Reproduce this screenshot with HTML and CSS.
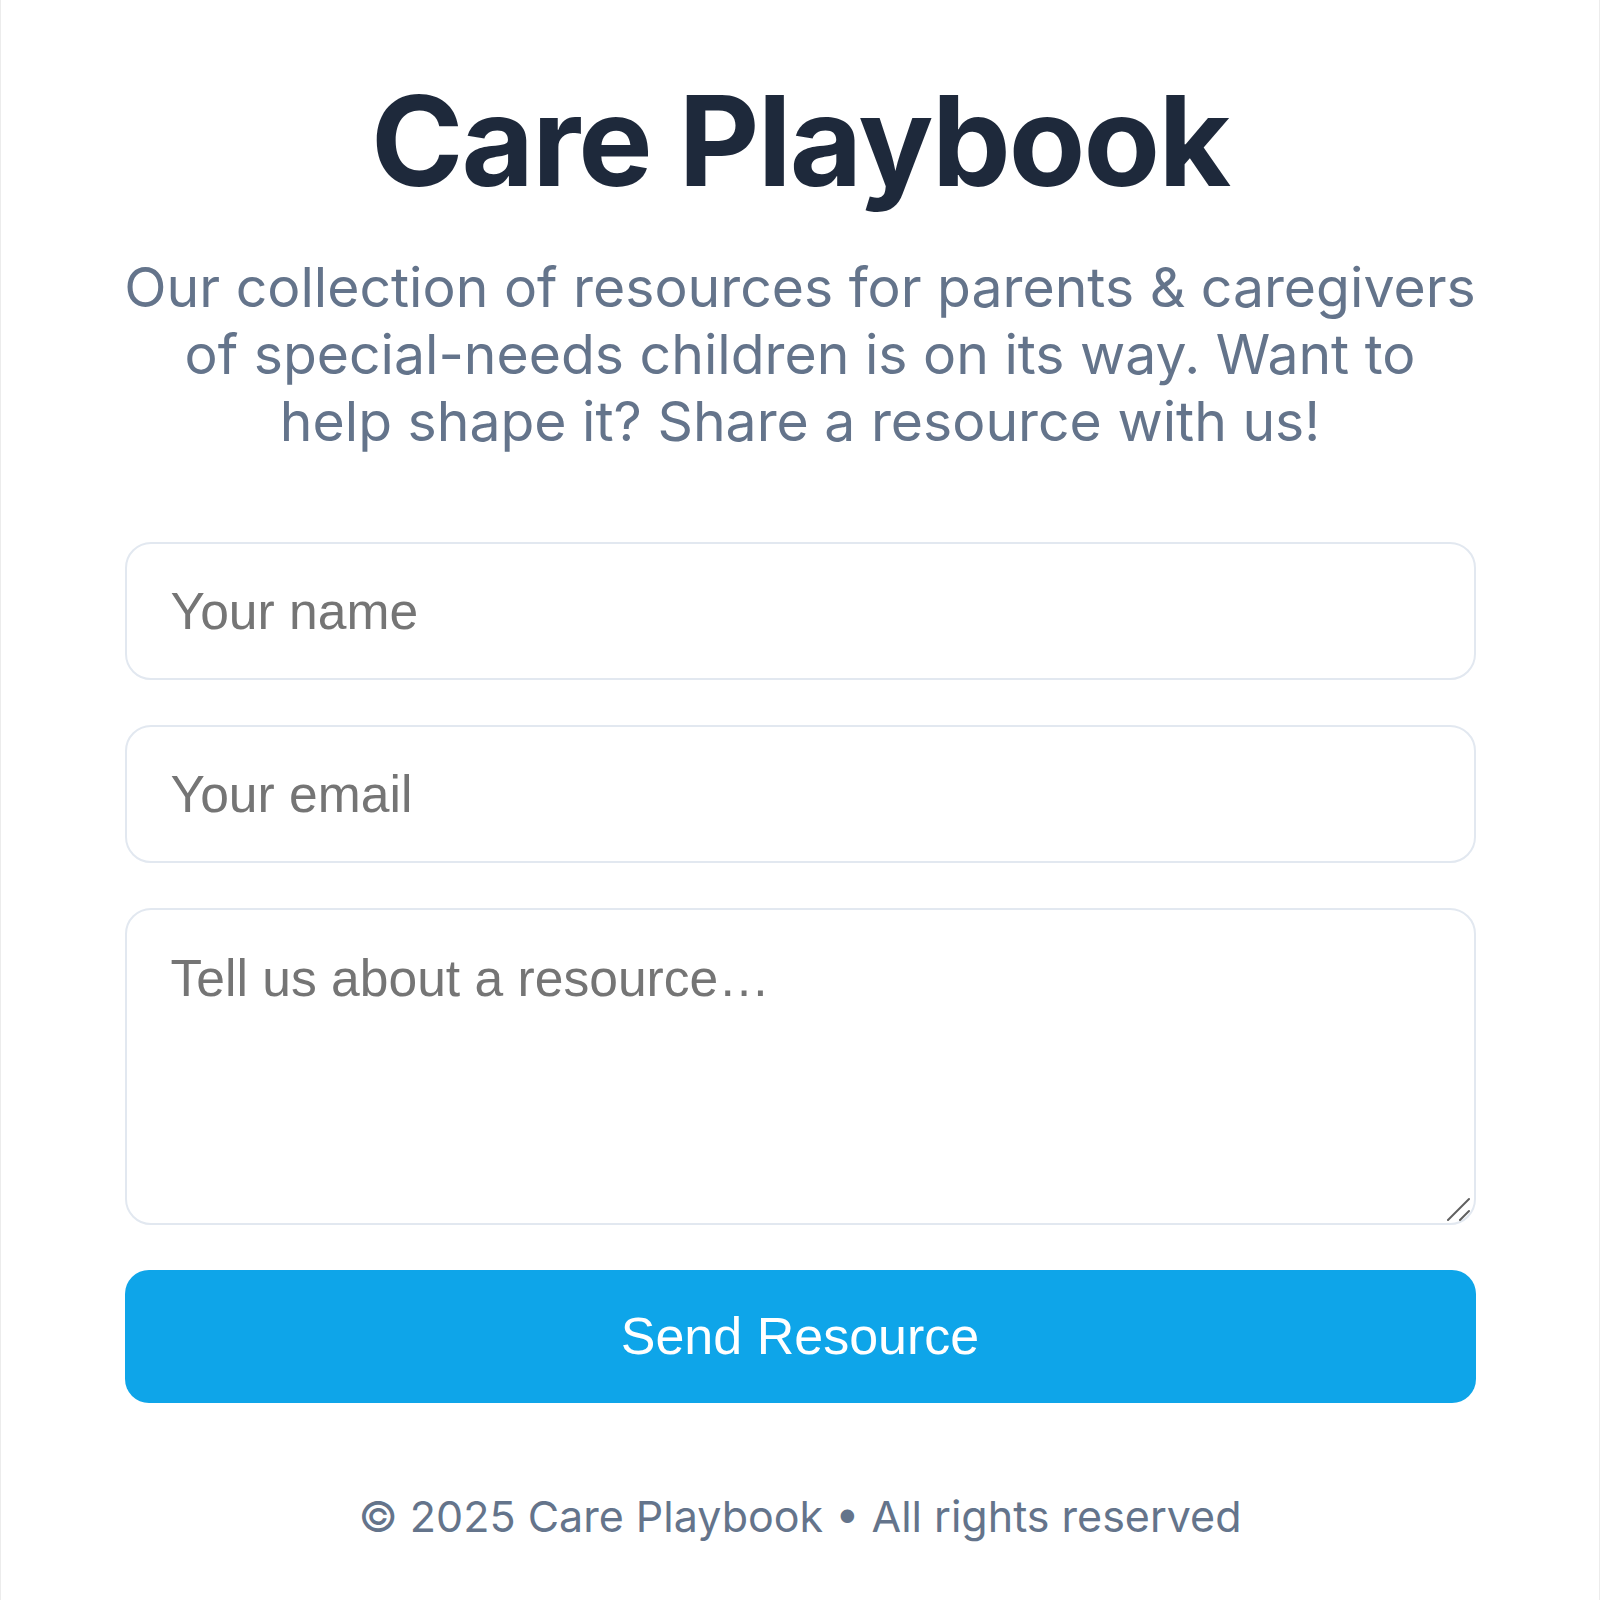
FILE: index.html
```html
<!DOCTYPE html>
<html lang="en">
<head>
<meta charset="utf-8">
<title>Care Playbook</title>
<link rel="stylesheet" href="styles.css">
</head>
<body>
<div class="page">
  <main class="container">
    <h1 class="title">Care Playbook</h1>
    <p class="subtitle">Our collection of resources for parents &amp; caregivers of special-needs children is on its way. Want to help shape it? Share a resource with us!</p>
    <form class="form">
      <input class="field" type="text" placeholder="Your name">
      <input class="field" type="email" placeholder="Your email">
      <div class="area-wrap">
        <textarea class="field area" placeholder="Tell us about a resource…"></textarea>
        <svg class="grip" width="24" height="24" viewBox="0 0 24 24" aria-hidden="true">
          <line x1="2" y1="23" x2="23" y2="2" stroke="#5f5f5f" stroke-width="2" stroke-linecap="round"/>
          <line x1="14" y1="23" x2="23" y2="14" stroke="#5f5f5f" stroke-width="2" stroke-linecap="round"/>
        </svg>
      </div>
      <button class="submit" type="button">Send Resource</button>
    </form>
    <footer class="footer">© 2025 Care Playbook • All rights reserved</footer>
  </main>
</div>
</body>
</html>
```
FILE: styles.css
```css
* { box-sizing: border-box; }
html, body { margin: 0; padding: 0; background: #ffffff; }
.page {
  min-height: 1600px;
  border-left: 1px solid #ececec;
  border-right: 1px solid #ececec;
}
.container {
  width: 1351px;
  margin: 0 auto;
  padding-top: 78px;
  display: flex;
  flex-direction: column;
  font-family: "Inter", "Liberation Sans", sans-serif;
}
.title {
  margin: 0;
  text-align: center;
  font-size: 125px;
  line-height: 1;
  font-weight: 700;
  color: #1e293b;
  letter-spacing: -0.015em;
}
.subtitle {
  margin: 50px -2px 0;
  text-align: center;
  font-size: 55.3px;
  line-height: 67.2px;
  color: #64748b;
}
.form {
  margin-top: 87px;
  display: flex;
  flex-direction: column;
  gap: 45px;
}
.field {
  display: block;
  width: 100%;
  height: 138px;
  border: 2px solid #e2e8f0;
  border-radius: 26px;
  padding: 38px 44px;
  font-family: "Liberation Sans", Arial, sans-serif;
  font-size: 51.6px;
  color: #1e293b;
  background: #fff;
  outline: none;
}
.field::placeholder { color: #757575; }
.area-wrap {
  position: relative;
}
.area {
  height: 317px;
  resize: none;
}
.grip {
  position: absolute;
  right: 6px;
  bottom: 4px;
}
.submit {
  display: block;
  width: 100%;
  height: 133px;
  border: 0;
  border-radius: 24px;
  background: #0ea5e9;
  color: #ffffff;
  font-family: "Liberation Sans", Arial, sans-serif;
  font-size: 52px;
  font-weight: 500;
}
.footer {
  margin-top: 83px;
  text-align: center;
  font-size: 43px;
  line-height: 60px;
  color: #64748b;
}
```
